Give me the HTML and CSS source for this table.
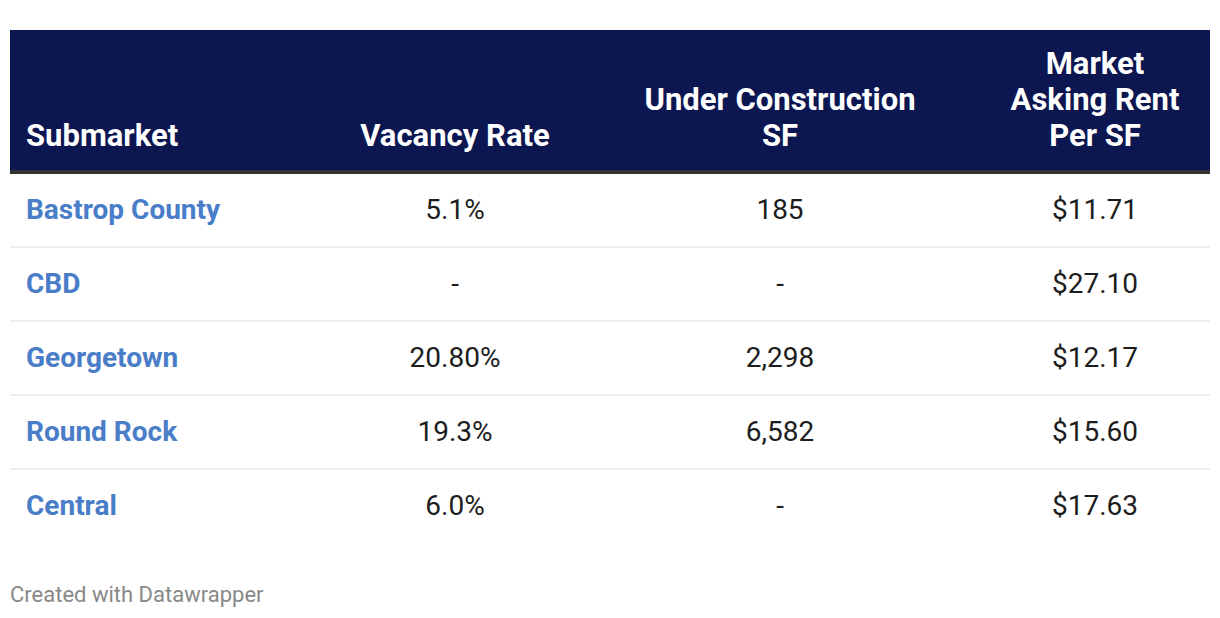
FILE: index.html
```html
<!DOCTYPE html>
<html>
<head>
<meta charset="utf-8">
<link rel="stylesheet" href="styles.css">
</head>
<body>
<div class="chart">
  <table class="dw-table">
    <colgroup>
      <col class="c1"><col class="c2"><col class="c3"><col class="c4">
    </colgroup>
    <thead>
      <tr>
        <th class="left">Submarket</th>
        <th>Vacancy Rate</th>
        <th>Under Construction<br>SF</th>
        <th>Market<br>Asking Rent<br>Per SF</th>
      </tr>
    </thead>
    <tbody>
      <tr><td class="left name">Bastrop County</td><td>5.1%</td><td>185</td><td>$11.71</td></tr>
      <tr><td class="left name">CBD</td><td>-</td><td>-</td><td>$27.10</td></tr>
      <tr><td class="left name">Georgetown</td><td>20.80%</td><td>2,298</td><td>$12.17</td></tr>
      <tr><td class="left name">Round Rock</td><td>19.3%</td><td>6,582</td><td>$15.60</td></tr>
      <tr><td class="left name">Central</td><td>6.0%</td><td>-</td><td>$17.63</td></tr>
    </tbody>
  </table>
  <div class="footer">Created with Datawrapper</div>
</div>
</body>
</html>
```
FILE: styles.css
```css
html, body {
  margin: 0;
  padding: 0;
  background: #ffffff;
}
body {
  font-family: Roboto, "Liberation Sans", sans-serif;
}
.chart {
  padding: 30px 10px 0 10px;
}
.dw-table {
  width: 1200px;
  border-collapse: collapse;
  table-layout: fixed;
}
.c1 { width: 320px; }
.c2 { width: 250px; }
.c3 { width: 400px; }
.c4 { width: 230px; }
th {
  background: #0c1650;
  color: #ffffff;
  font-weight: 700;
  font-size: 31px;
  line-height: 36px;
  text-align: center;
  vertical-align: bottom;
  padding: 16px 16px 16px 16px;
  border-bottom: 4px solid #333333;
}
td {
  font-size: 28px;
  line-height: 32px;
  color: #1d1d1d;
  text-align: center;
  vertical-align: middle;
  height: 72px;
  padding: 0 16px;
  border-bottom: 2px solid #eeeeee;
}
tbody tr:last-child td {
  border-bottom: none;
}
.left {
  text-align: left;
}
td.name {
  color: #4a7dc8;
  font-weight: 700;
}
.footer {
  margin-top: 40px;
  font-size: 22px;
  color: #888888;
}
```
